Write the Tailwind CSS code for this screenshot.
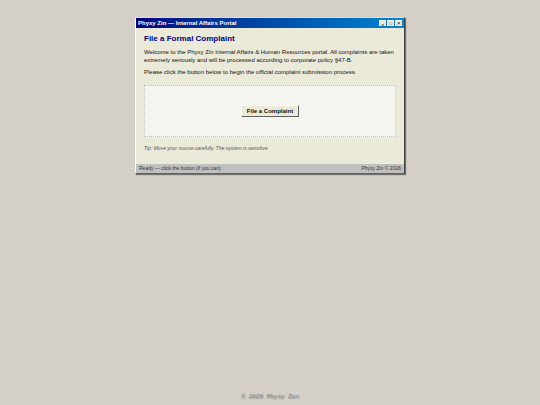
<!DOCTYPE html>
<html lang="en">
  <head>
    <meta charset="UTF-8" />
    <meta name="viewport" content="width=device-width, initial-scale=1.0" />
    <title>Phyxy Zin — Internal Affairs Portal</title>
    <script src="https://cdn.jsdelivr.net/npm/@tailwindcss/browser@4"></script>
  </head>
  <body class="min-h-screen flex flex-col items-center justify-between bg-[#d4d0c8] pt-[17px] pb-1 font-['Liberation_Sans',Arial,sans-serif] text-[6px] text-[#111]">
    <!-- Portal window -->
    <main class="w-1/2 border border-t-[#d4e0e8] border-l-white border-r-[#404040] border-b-[#606060] bg-[#ebe9d8] shadow-[1px_1px_1px_rgba(0,0,0,0.45)]">
      <header class="flex items-center justify-between h-[10px] px-[2px] bg-linear-to-r from-[#000080] to-[#1084d0] text-white">
        <h1 class="font-bold leading-[8px]">Phyxy Zin — Internal Affairs Portal</h1>
        <div class="flex gap-px">
          <button type="button" aria-label="Minimize" class="flex items-center justify-center w-[7px] h-[6px] bg-[#ece9d8] border-t border-l border-white">
            <svg class="w-[6px] h-[5px]" viewBox="0 0 6 5"><path d="M1.5 4h2.5" stroke="#222" stroke-width="0.8" /></svg>
          </button>
          <button type="button" aria-label="Maximize" class="flex items-center justify-center w-[7px] h-[6px] bg-[#ece9d8] border-t border-l border-white">
            <svg class="w-[6px] h-[5px]" viewBox="0 0 6 5"><path d="M1.5 1.5h2.5v2h-2.5z" fill="none" stroke="#aaa" stroke-width="0.5" /></svg>
          </button>
          <button type="button" aria-label="Close" class="flex items-center justify-center w-[7px] h-[6px] bg-[#ece9d8] border-t border-l border-white">
            <svg class="w-[6px] h-[5px]" viewBox="0 0 6 5"><path d="M1.8 1.3l2 2M3.8 1.3l-2 2" stroke="#111" stroke-width="0.8" /></svg>
          </button>
        </div>
      </header>

      <section class="px-2 pt-[6px] pb-3">
        <h2 class="mb-1 text-[8px] leading-[10px] font-bold text-[#000080]">File a Formal Complaint</h2>
        <p class="mb-1 leading-[8px]">
          Welcome to the Phyxy Zin Internal Affairs &amp; Human Resources portal. All complaints are taken<br />
          extremely seriously and will be processed according to corporate policy §47-B.
        </p>
        <p class="leading-[8px]">Please click the button below to begin the official complaint submission process.</p>

        <div class="flex items-center justify-center h-[52px] mt-[9px] mb-[7px] border border-dotted border-[#c4c2b8] bg-[#f5f5f0]">
          <button
            type="button"
            class="px-[5px] h-3 border border-t-white border-l-white border-r-[#606060] border-b-[#606060] bg-[#ece9d8] font-bold leading-[10px]">
            File a Complaint
          </button>
        </div>

        <p class="text-[5px] leading-[8px] italic text-[#555]">Tip: Move your mouse carefully. The system is sensitive.</p>
      </section>

      <footer class="flex justify-between h-[9px] px-[3px] bg-[#c0c0c0] text-[5px] leading-[9px] text-[#333]">
        <span>Ready — click the button (if you can)</span>
        <span>Phyxy Zin © 2026</span>
      </footer>
    </main>

    <p class="font-['Liberation_Mono',monospace] text-[6px] leading-[8px] italic text-[#888] text-shadow-[1px_1px_1px_#888]">© 2026 Phyxy Zin</p>
  </body>
</html>
